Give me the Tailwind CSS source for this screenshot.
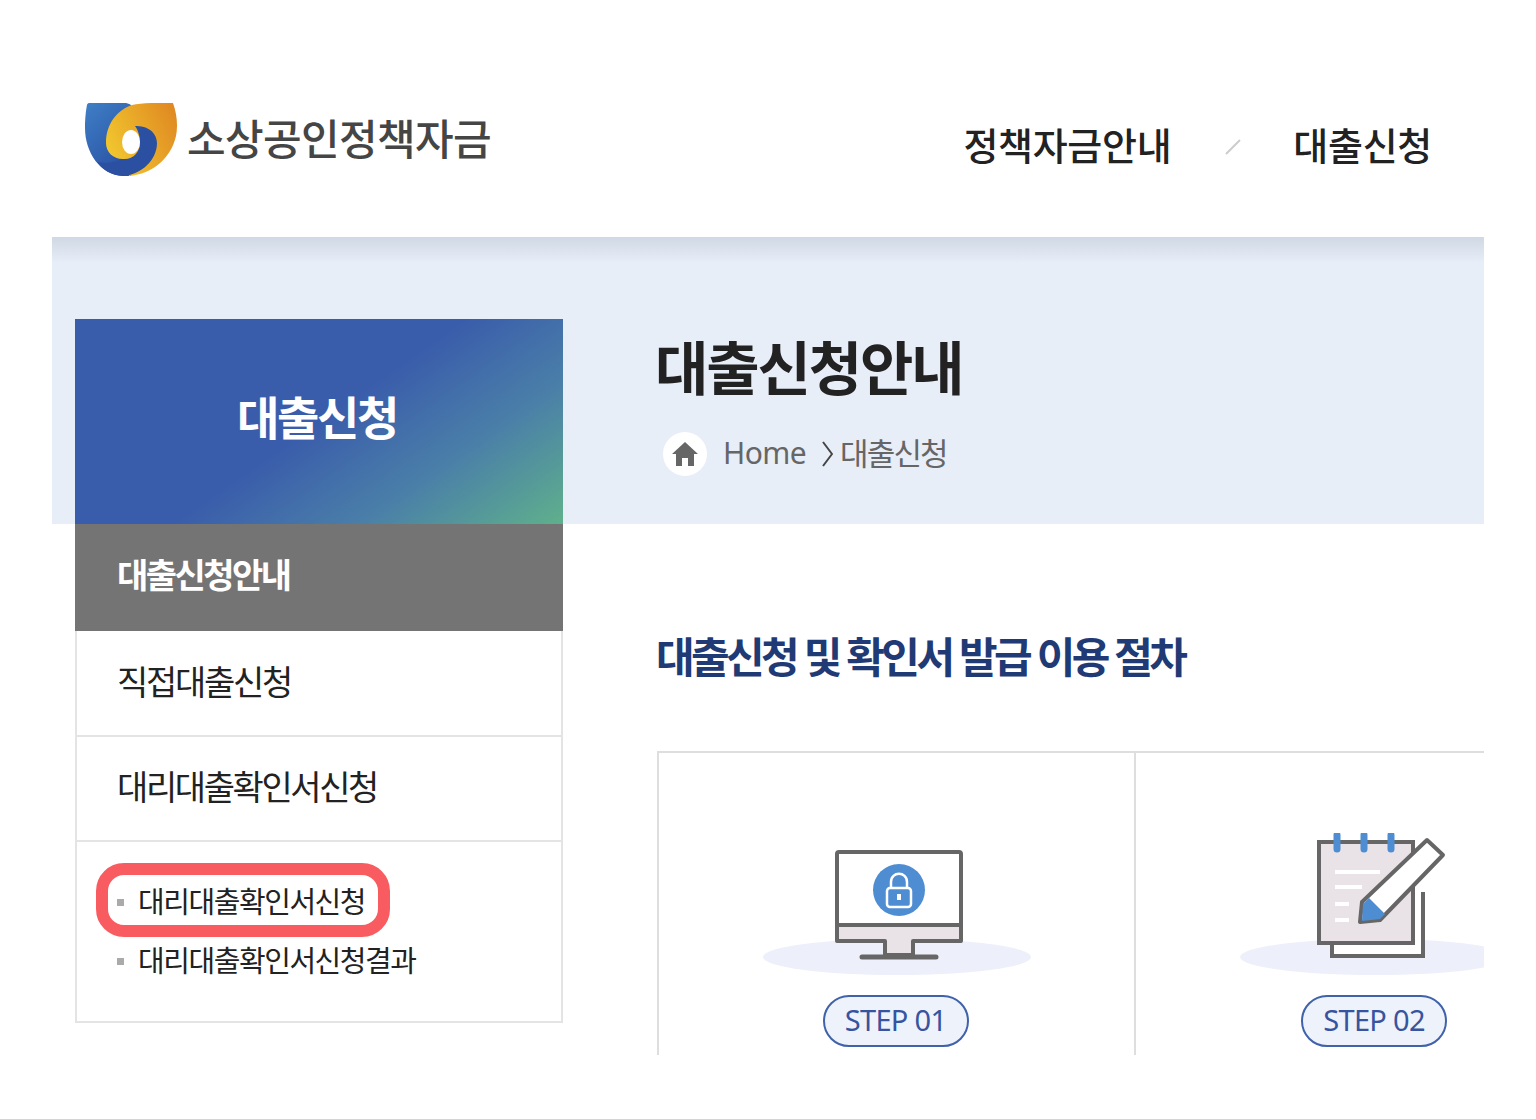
<!DOCTYPE html>
<html lang="ko">
<head>
  <meta charset="UTF-8" />
  <title>소상공인정책자금</title>
  <script src="https://cdn.jsdelivr.net/npm/@tailwindcss/browser@4"></script>
</head>
<body class="bg-white font-['Noto_Sans_CJK_KR',sans-serif] text-[#222]">
  <!-- header -->
  <header class="h-[237px] flex items-start justify-between pl-[85px] pr-[104px]">
    <div class="flex mt-[102px]">
      <svg width="92" height="74" viewBox="0 0 92 74">
        <defs>
          <linearGradient id="b1" x1="0" y1="0" x2="0.6" y2="1"><stop offset="0" stop-color="#3f7fc6" /><stop offset="1" stop-color="#2a52a4" /></linearGradient>
          <linearGradient id="g1" x1="0" y1="0.7" x2="1" y2="0.2"><stop offset="0" stop-color="#f2c92f" /><stop offset="1" stop-color="#e08a22" /></linearGradient>
        </defs>
        <path d="M4 1H41C46 2 48 4 46 8V74H38C15 73 0 50 0 26C0 16 1 8 2 3C2 2 3 1 4 1Z" fill="url(#b1)" />
        <path d="M47 3C52 2 58 1 66 1H88C92 12 93 24 91 34C86 56 68 72 44 74L38 57C28 57 21 50 21 41C21 22 32 8 47 3Z" fill="url(#g1)" />
        <path d="M50 24C64 23 72 32 72 41C72 58 56 73 38 74C26 73 18 68 12 60C22 62 30 60 38 57C48 58 55 50 55 41C55 34 53 28 50 24Z" fill="#2b50a2" />
        <ellipse cx="46" cy="40" rx="9" ry="12" fill="#fff" />
      </svg>
      <span class="ml-[10px] mt-[6px] h-[58px] leading-[58px] text-[42px] font-medium tracking-[-0.65px] text-[#454545]">소상공인정책자금</span>
    </div>
    <nav class="flex items-center mt-[118px] h-[52px] text-[38px] leading-[52px] font-medium tracking-[-0.3px] text-[#222]">
      <a>정책자금안내</a>
      <svg class="ml-[54px] mr-[52px] mt-[6px]" width="16" height="16" viewBox="0 0 16 16"><path d="M1 15L15 1" stroke="#ccc" stroke-width="2" /></svg>
      <a>대출신청</a>
    </nav>
  </header>

  <!-- band + content -->
  <div class="mx-[52px] pt-[82px] pl-[23px] flex bg-[linear-gradient(#cfd8e4,#e8eef8_26px,#e8eef8_287px,#fff_287px)]">
    <aside class="w-[488px] shrink-0">
      <div class="h-[205px] flex items-center justify-center pb-[12px] pr-[4px] text-white text-[46px] font-bold tracking-[-2.3px] bg-[linear-gradient(145deg,#3a5dab_0%,#3a5dab_50%,#4a7fa8_74%,#5fb08c_100%)]">대출신청</div>
      <div class="h-[107px] flex items-center pb-[8px] pl-[42px] bg-[#747474] text-white text-[34px] font-bold tracking-[-2.55px]">대출신청안내</div>
      <div class="border-2 border-t-0 border-[#e4e4e4]">
        <div class="h-[106px] flex items-center pb-[5px] pl-[40px] border-b-2 border-[#e4e4e4] text-[34px] tracking-[-2.3px]">직접대출신청</div>
        <div class="h-[105px] flex items-center pb-[6px] pl-[40px] border-b-2 border-[#e4e4e4] text-[34px] tracking-[-2.4px]">대리대출확인서신청</div>
        <ul class="relative h-[179px] pt-[29px] pl-[40px] text-[29px] tracking-[-1.45px] leading-[59px]">
          <li class="flex items-center"><i class="w-[7px] h-[7px] bg-[#aaa] mr-[14px] mt-[4px]"></i>대리대출확인서신청</li>
          <li class="flex items-center"><i class="w-[7px] h-[7px] bg-[#aaa] mr-[14px] mt-[4px]"></i>대리대출확인서신청결과</li>
          <span class="absolute left-[19px] top-[21px] w-[294px] h-[74px] border-[12px] border-[#f85c60] rounded-[28px]"></span>
        </ul>
      </div>
    </aside>

    <main class="pl-[94px] flex-1 min-w-0">
      <h1 class="h-[98px] leading-[92px] -ml-[2px] text-[58px] font-bold tracking-[-2.1px] text-[#222]">대출신청안내</h1>
      <div class="mt-[15px] h-[44px] flex items-center text-[#666]">
        <span class="ml-[6px] w-[44px] h-[44px] rounded-full bg-white flex items-center justify-center">
          <svg width="28" height="26" viewBox="0 0 28 26"><path d="M14 1L1 13H5V25H11V17H17V25H23V13H27Z" fill="#666" /></svg>
        </span>
        <span class="ml-[16px] pb-[4px] font-['Noto_Sans',sans-serif] text-[30px] tracking-[-0.6px]">Home</span>
        <svg class="ml-[16px] mr-[7px]" width="11" height="26" viewBox="0 0 11 26"><path d="M1 1L10 13L1 25" fill="none" stroke="#444" stroke-width="2" /></svg>
        <span class="pb-[4px] text-[31px] tracking-[-1.8px]">대출신청</span>
      </div>
      <h2 class="mt-[151px] h-[60px] leading-[56px] -ml-[1px] text-[42px] font-bold tracking-[-3.6px] [word-spacing:-0.6px] text-[#1f3a74]">대출신청 및 확인서 발급 이용 절차</h2>

      <div class="mt-[64px] h-[304px] flex overflow-hidden border-t-2 border-l-2 border-[#dedede]">
        <div class="w-[477px] shrink-0 flex flex-col items-center pt-[95px] border-r-2 border-[#dedede]">
          <svg width="270" height="128" viewBox="0 0 270 128">
            <ellipse cx="135" cy="109" rx="134" ry="18" fill="#edf0fa" />
            <g transform="translate(-1 0)">
              <rect x="76" y="4" width="124" height="89" rx="2" fill="#fff" stroke="#666" stroke-width="4" />
              <path d="M76 77H200V93H152V107H124V93H76Z" fill="#e9e3e7" stroke="#666" stroke-width="4" stroke-linejoin="round" />
              <path d="M101 109H175" stroke="#666" stroke-width="5" stroke-linecap="round" />
              <circle cx="138" cy="42" r="26" fill="#4f8dd2" />
              <rect x="126" y="40" width="24" height="19" rx="3" fill="none" stroke="#fff" stroke-width="2.5" />
              <path d="M130 40V34C130 23 146 23 146 34V40" fill="none" stroke="#fff" stroke-width="2.5" />
              <path d="M138 46V52" stroke="#fff" stroke-width="4" />
            </g>
          </svg>
          <span class="mt-[19px] mr-[2px] pb-[2px] w-[146px] h-[52px] rounded-full border-2 border-[#3f62ab] bg-[#eef2fa] flex items-center justify-center font-['Noto_Sans',sans-serif] text-[29px] tracking-[-0.7px] text-[#3654a0]">STEP 01</span>
        </div>
        <div class="w-[478px] shrink-0 flex flex-col items-center pt-[80px]">
          <svg width="270" height="143" viewBox="0 0 270 143">
            <ellipse cx="135" cy="124" rx="135" ry="18" fill="#edf0fa" />
            <path d="M92 110V123H183V59" fill="#fff" stroke="#666" stroke-width="4" />
            <rect x="79" y="9" width="94" height="101" fill="#e9e3e7" stroke="#666" stroke-width="4" />
            <path d="M97 2V16M124 2V16M151 2V16" stroke="#4f8dd2" stroke-width="7" stroke-linecap="round" />
            <path d="M95 39H140M95 54H122M95 71H109M95 87H109" stroke="#fff" stroke-width="4" />
            <path d="M122 69L187 7L203 22L140 87L120 89Z" fill="#fff" stroke="#666" stroke-width="4" stroke-linejoin="round" />
            <path d="M123 71L129 65L145 81L140 86L122 88Z" fill="#4f8dd2" />
          </svg>
          <span class="mt-[19px] mr-[2px] pb-[2px] w-[146px] h-[52px] rounded-full border-2 border-[#3f62ab] bg-[#eef2fa] flex items-center justify-center font-['Noto_Sans',sans-serif] text-[29px] tracking-[-0.7px] text-[#3654a0]">STEP 02</span>
        </div>
      </div>
    </main>
  </div>
</body>
</html>
